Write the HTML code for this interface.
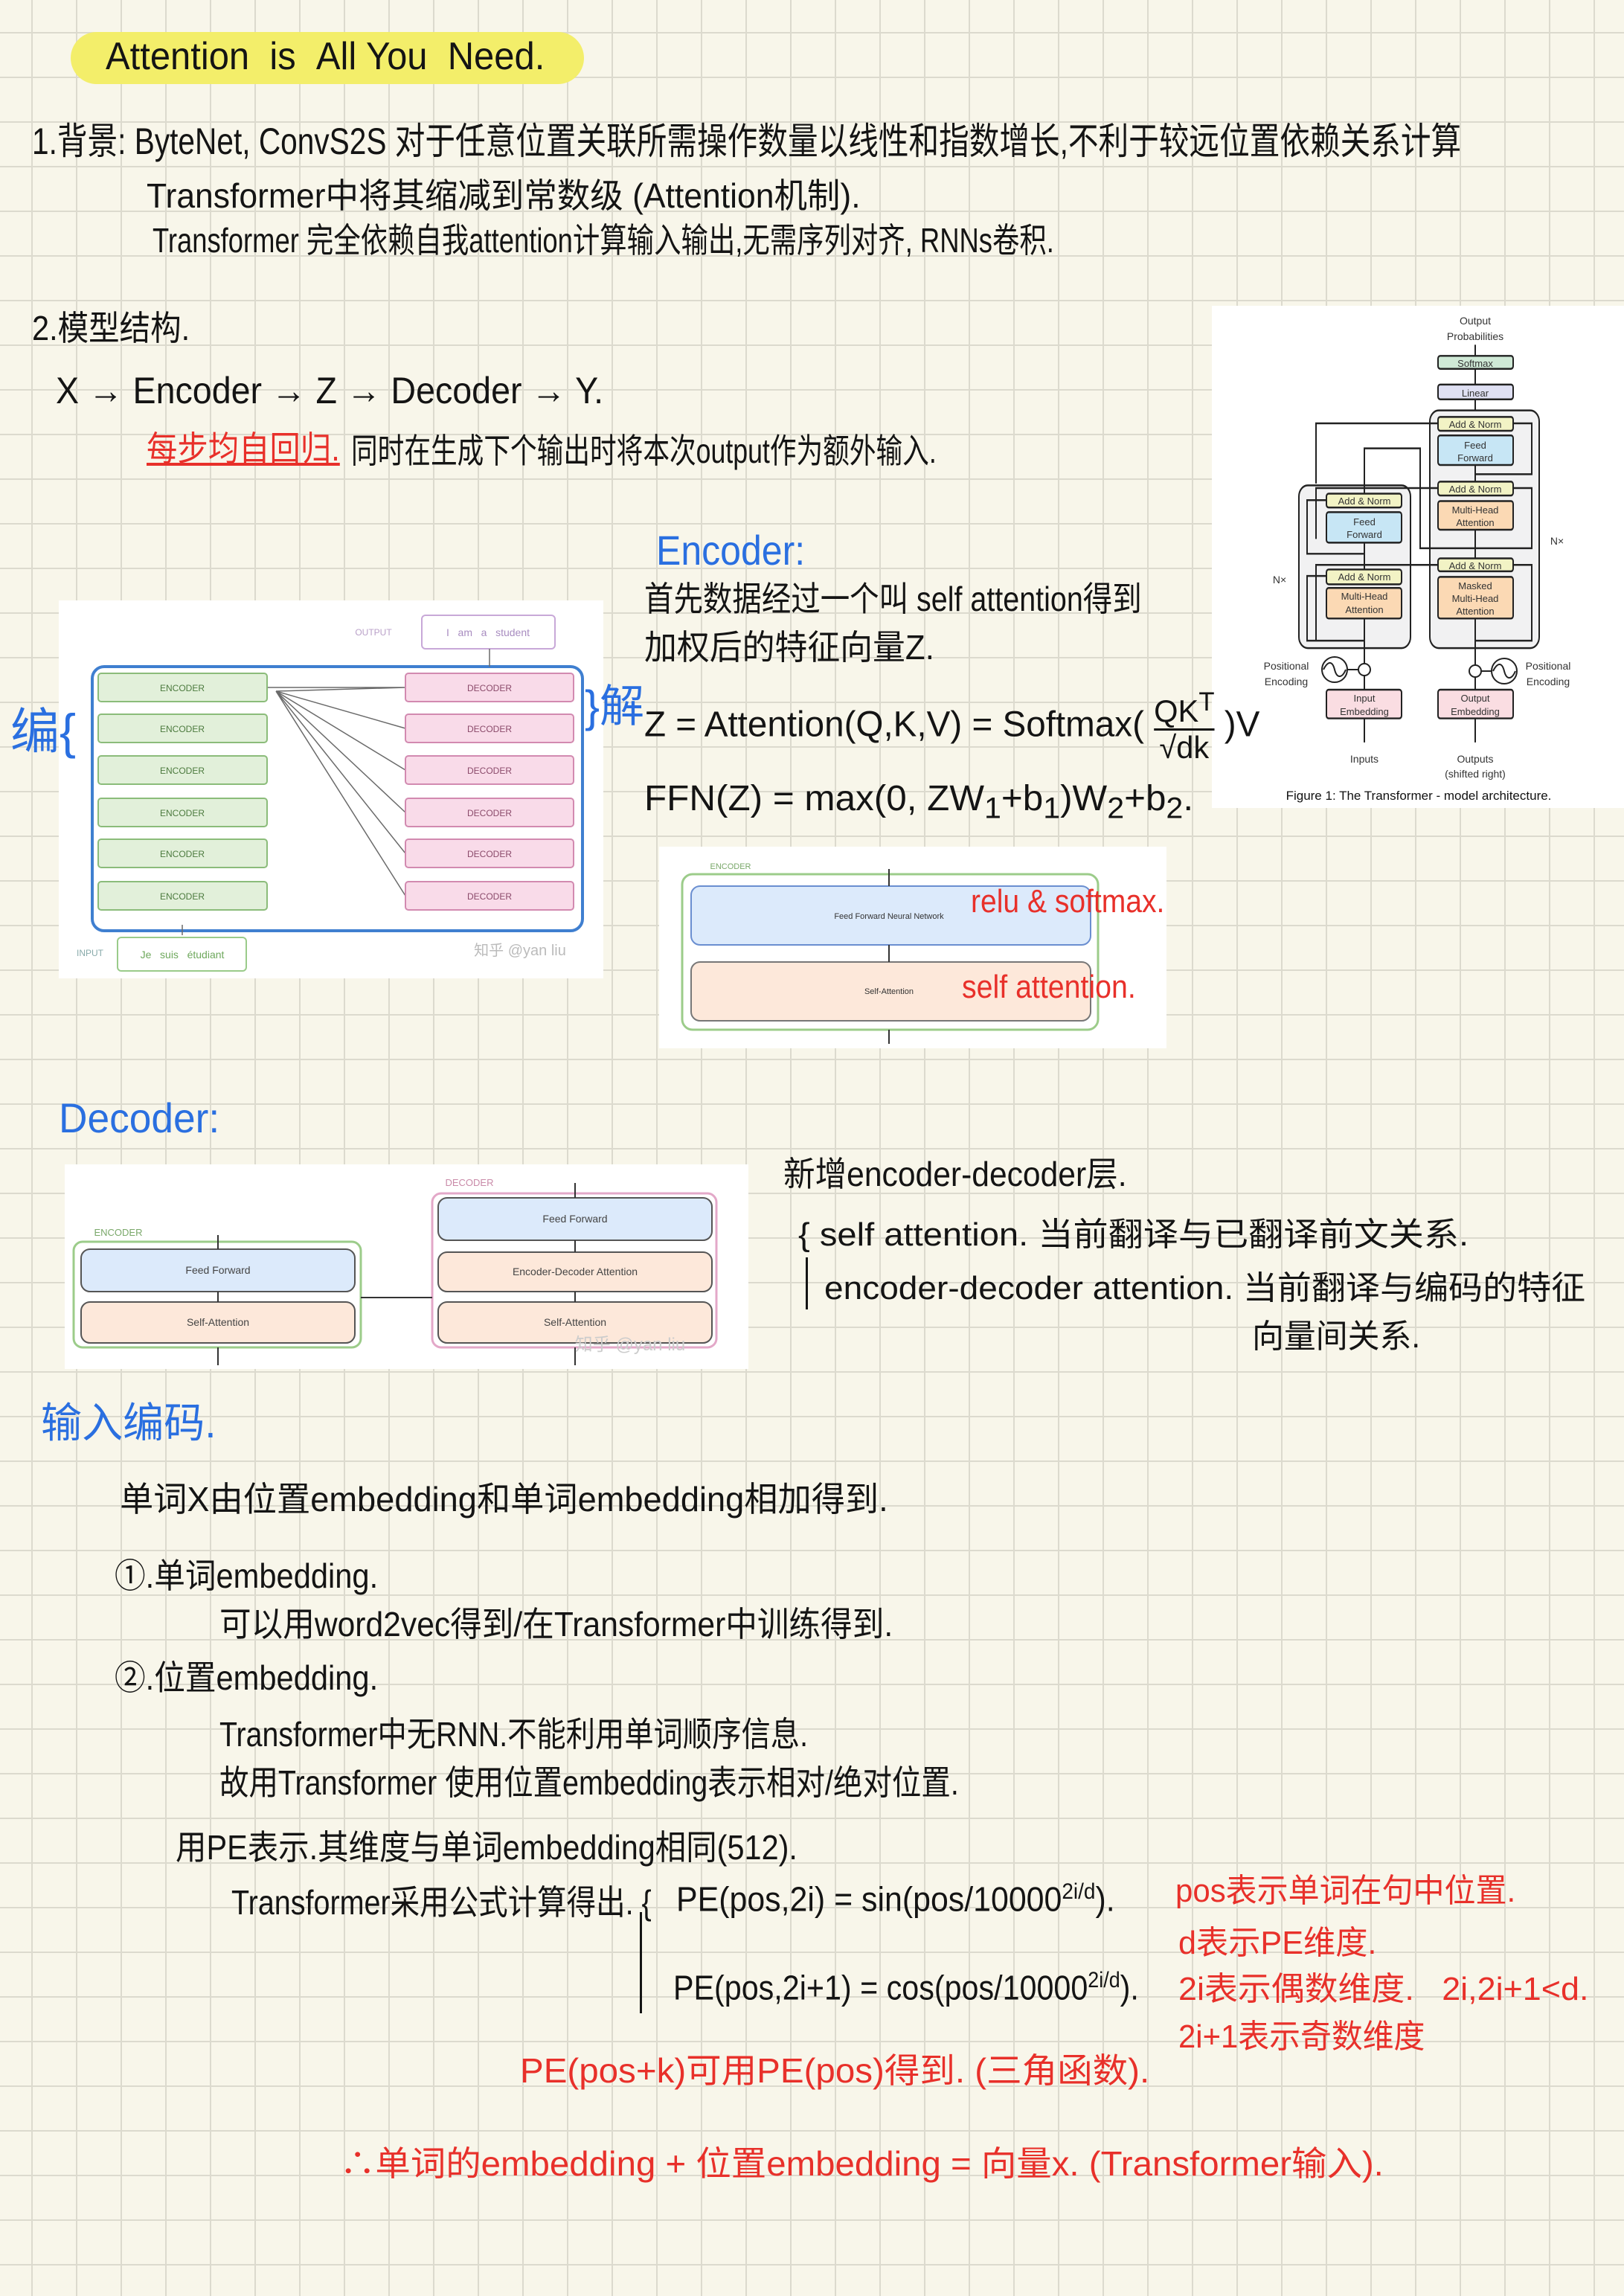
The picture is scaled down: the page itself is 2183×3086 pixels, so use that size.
<!DOCTYPE html>
<html><head><meta charset="utf-8"><style>
*{margin:0;padding:0;box-sizing:border-box}
body{width:2183px;height:3086px;position:relative;overflow:hidden;background-color:#f8f6ea;
background-image:linear-gradient(to right,#dcdace 2px,transparent 2px),linear-gradient(to bottom,#dcdace 2px,transparent 2px);
background-size:60px 60px;background-position:42px 43px;
font-family:"Liberation Sans","Noto Sans CJK SC",sans-serif;color:#141414}
.t{position:absolute;white-space:nowrap;font-size:46px;line-height:1;transform-origin:0 0;z-index:2}
.r{color:#e8302a}.b{color:#2a6fe0}
.img{position:absolute;background:#fff;z-index:1}
svg text{font-family:"Liberation Sans",sans-serif}
</style></head><body>

<div style="position:absolute;left:95px;top:43px;width:690px;height:70px;border-radius:35px;background:#f3ee6a"></div>
<div class="t" style="left:142px;top:50px;font-size:52px;--w:590">Attention &nbsp;is &nbsp;All You &nbsp;Need.</div>

<div class="t" style="left:43px;top:165px;font-size:50px;--w:1921">1.背景: ByteNet, ConvS2S 对于任意位置关联所需操作数量以线性和指数增长,不利于较远位置依赖关系计算</div>
<div class="t" style="left:197px;top:240px;--w:960">Transformer中将其缩减到常数级 (Attention机制).</div>
<div class="t" style="left:205px;top:300px;--w:1212">Transformer 完全依赖自我attention计算输入输出,无需序列对齐, RNNs卷积.</div>

<div class="t" style="left:43px;top:418px;--w:212">2.模型结构.</div>
<div class="t" style="left:75px;top:500px;font-size:50px;--w:736">X → Encoder → Z → Decoder → Y.</div>
<div class="t r" style="left:197px;top:580px;text-decoration:underline;--w:260">每步均自回归.</div>
<div class="t" style="left:472px;top:583px;--w:787">同时在生成下个输出时将本次output作为额外输入.</div>

<div class="t b" style="left:882px;top:712px;font-size:56px;--w:200">Encoder:</div>
<div class="t" style="left:866px;top:782px;--w:669">首先数据经过一个叫 self attention得到</div>
<div class="t" style="left:866px;top:847px;--w:390">加权后的特征向量Z.</div>
<div class="t" style="left:866px;top:925px;font-size:48px;--w:827">Z = Attention(Q,K,V) = Softmax( <span style="display:inline-block;vertical-align:middle;text-align:center;font-size:42px;line-height:1.1"><span style="display:block;border-bottom:3px solid #141414">QK<sup>T</sup></span>√dk</span> )V</div>
<div class="t" style="left:866px;top:1050px;font-size:48px;--w:738">FFN(Z) = max(0, ZW<sub>1</sub>+b<sub>1</sub>)W<sub>2</sub>+b<sub>2</sub>.</div>

<!-- Transformer figure -->
<div class="img" style="left:1629px;top:411px;width:554px;height:675px">
<svg width="554" height="675" viewBox="0 0 554 675" font-size="14" text-anchor="middle">
<g transform="translate(0,2.67) scale(1,1.243)">
<rect x="293" y="111" width="147" height="257" rx="12" fill="#f1f1f2" stroke="#222" stroke-width="2"/>
<rect x="117" y="192" width="150" height="176" rx="12" fill="#f1f1f2" stroke="#222" stroke-width="2"/>
<g stroke="#222" stroke-width="2">
<rect x="304" y="52" width="101" height="14" rx="3" fill="#cfe9d6"/>
<rect x="304" y="83" width="101" height="16" rx="3" fill="#dfe0f3"/>
<rect x="304" y="118" width="101" height="15" rx="3" fill="#f2f3c5"/>
<rect x="304" y="138" width="101" height="32" rx="3" fill="#c7e6f5"/>
<rect x="304" y="188" width="101" height="15" rx="3" fill="#f2f3c5"/>
<rect x="304" y="209" width="101" height="31" rx="3" fill="#fbd9b4"/>
<rect x="304" y="271" width="101" height="14" rx="3" fill="#f2f3c5"/>
<rect x="304" y="291" width="101" height="45" rx="3" fill="#fbd9b4"/>
<rect x="304" y="413" width="101" height="31" rx="3" fill="#fadde2"/>
<rect x="154" y="201" width="101" height="15" rx="3" fill="#f2f3c5"/>
<rect x="154" y="221" width="101" height="33" rx="3" fill="#c7e6f5"/>
<rect x="154" y="283" width="101" height="16" rx="3" fill="#f2f3c5"/>
<rect x="154" y="303" width="101" height="33" rx="3" fill="#fbd9b4"/>
<rect x="154" y="413" width="101" height="31" rx="3" fill="#fadde2"/>
<path d="M354 52V40M354 83V66M354 111V99M354 188V170M354 271V240M354 413V336M354 470V444M205 413V336M205 470V444M205 283V254M205 201V152H280V260H354" fill="none"/>
<path d="M304 125H140V190M304 195H140V250M304 278H140V360H200M154 208H128V266H205M154 290H128V360H205M405 125H430V180H354M405 195H430V260H354M405 278H430V360H354" fill="none"/>
</g></g>
<g stroke="#222" stroke-width="2">
<circle cx="205" cy="489" r="8" fill="#fff"/><circle cx="354" cy="491" r="8" fill="#fff"/>
<circle cx="165" cy="489" r="17" fill="#fff"/><circle cx="393" cy="491" r="17" fill="#fff"/>
<path d="M182 489H197M362 491H376M150 489c6-12 12-12 15 0s10 12 15 0M378 491c6-12 12-12 15 0s10 12 15 0" fill="none"/>
</g>
<g fill="#333">
<text x="354" y="25">Output</text><text x="354" y="46">Probabilities</text>
<text x="354" y="82" font-size="13">Softmax</text><text x="354" y="122" font-size="13">Linear</text>
<text x="354" y="164" font-size="13">Add &amp; Norm</text><text x="354" y="192" font-size="13">Feed</text><text x="354" y="209" font-size="13">Forward</text>
<text x="354" y="251" font-size="13">Add &amp; Norm</text><text x="354" y="279" font-size="13">Multi-Head</text><text x="354" y="296" font-size="13">Attention</text>
<text x="354" y="354" font-size="13">Add &amp; Norm</text><text x="354" y="381" font-size="13">Masked</text><text x="354" y="398" font-size="13">Multi-Head</text><text x="354" y="415" font-size="13">Attention</text>
<text x="354" y="532" font-size="13">Output</text><text x="354" y="550" font-size="13">Embedding</text>
<text x="205" y="267" font-size="13">Add &amp; Norm</text><text x="205" y="295" font-size="13">Feed</text><text x="205" y="312" font-size="13">Forward</text>
<text x="205" y="369" font-size="13">Add &amp; Norm</text><text x="205" y="395" font-size="13">Multi-Head</text><text x="205" y="413" font-size="13">Attention</text>
<text x="205" y="532" font-size="13">Input</text><text x="205" y="550" font-size="13">Embedding</text>
<text x="100" y="489">Positional</text><text x="100" y="510">Encoding</text>
<text x="452" y="489">Positional</text><text x="452" y="510">Encoding</text>
<text x="205" y="614">Inputs</text><text x="354" y="614">Outputs</text><text x="354" y="634">(shifted right)</text>
<text x="91" y="373">N×</text><text x="464" y="321">N×</text>
<text x="278" y="664" font-family="Liberation Serif" font-size="17" fill="#111">Figure 1: The Transformer - model architecture.</text>
</g></svg></div>

<!-- stack image -->
<div class="img" style="left:79px;top:807px;width:732px;height:508px">
<svg width="732" height="508" font-size="13" text-anchor="middle">
<text x="423" y="47" fill="#b9a0c8" font-size="12">OUTPUT</text>
<rect x="488" y="20" width="179" height="45" rx="5" fill="#fff" stroke="#c8a8d8" stroke-width="2"/>
<text x="577" y="48" fill="#a88cc0" font-size="14">I &#160; am &#160; a &#160; student</text>
<rect x="45" y="89" width="659" height="355" rx="16" fill="none" stroke="#3f7fd0" stroke-width="4"/>
<g stroke="#6a6a6a" stroke-width="1.5" fill="none">
<path d="M292 122L466 117M292 122L466 172M292 122L466 228M292 122L466 285M292 122L466 340M292 122L466 397M280 117H466"/>
<path d="M166 450V436M579 89V65"/>
</g>
<g font-size="12">
<rect x="53" y="98" width="227" height="38" rx="4" fill="#e2f0da" stroke="#8bbc7a" stroke-width="2"/><text x="166" y="122" fill="#4c7a3e">ENCODER</text>
<rect x="53" y="153" width="227" height="38" rx="4" fill="#e2f0da" stroke="#8bbc7a" stroke-width="2"/><text x="166" y="177" fill="#4c7a3e">ENCODER</text>
<rect x="53" y="209" width="227" height="38" rx="4" fill="#e2f0da" stroke="#8bbc7a" stroke-width="2"/><text x="166" y="233" fill="#4c7a3e">ENCODER</text>
<rect x="53" y="266" width="227" height="38" rx="4" fill="#e2f0da" stroke="#8bbc7a" stroke-width="2"/><text x="166" y="290" fill="#4c7a3e">ENCODER</text>
<rect x="53" y="321" width="227" height="38" rx="4" fill="#e2f0da" stroke="#8bbc7a" stroke-width="2"/><text x="166" y="345" fill="#4c7a3e">ENCODER</text>
<rect x="53" y="378" width="227" height="38" rx="4" fill="#e2f0da" stroke="#8bbc7a" stroke-width="2"/><text x="166" y="402" fill="#4c7a3e">ENCODER</text>
<rect x="466" y="98" width="226" height="38" rx="4" fill="#f9dbe9" stroke="#d28ab0" stroke-width="2"/><text x="579" y="122" fill="#8a4a6a">DECODER</text>
<rect x="466" y="153" width="226" height="38" rx="4" fill="#f9dbe9" stroke="#d28ab0" stroke-width="2"/><text x="579" y="177" fill="#8a4a6a">DECODER</text>
<rect x="466" y="209" width="226" height="38" rx="4" fill="#f9dbe9" stroke="#d28ab0" stroke-width="2"/><text x="579" y="233" fill="#8a4a6a">DECODER</text>
<rect x="466" y="266" width="226" height="38" rx="4" fill="#f9dbe9" stroke="#d28ab0" stroke-width="2"/><text x="579" y="290" fill="#8a4a6a">DECODER</text>
<rect x="466" y="321" width="226" height="38" rx="4" fill="#f9dbe9" stroke="#d28ab0" stroke-width="2"/><text x="579" y="345" fill="#8a4a6a">DECODER</text>
<rect x="466" y="378" width="226" height="38" rx="4" fill="#f9dbe9" stroke="#d28ab0" stroke-width="2"/><text x="579" y="402" fill="#8a4a6a">DECODER</text>
</g>
<text x="42" y="478" fill="#8aa" font-size="12">INPUT</text>
<rect x="79" y="453" width="173" height="45" rx="5" fill="#fff" stroke="#9acb8a" stroke-width="2"/>
<text x="166" y="481" fill="#6ea85c" font-size="14">Je &#160; suis &#160; étudiant</text>
<text x="620" y="477" fill="#bbb" font-size="20" font-family="Noto Sans CJK SC">知乎 @yan liu</text>
</svg></div>
<div class="t b" style="left:14px;top:950px;font-size:66px">编{</div>
<div class="t b" style="left:786px;top:920px;font-size:60px">}解</div>

<!-- encoder small -->
<div class="img" style="left:886px;top:1138px;width:682px;height:271px">
<svg width="682" height="271" text-anchor="middle">
<text x="96" y="30" fill="#7aa86a" font-size="11">ENCODER</text>
<rect x="31" y="37" width="559" height="209" rx="14" fill="none" stroke="#9ccc8a" stroke-width="3"/>
<rect x="43" y="53" width="537" height="79" rx="12" fill="#dceafb" stroke="#6a8ed0" stroke-width="2"/>
<rect x="43" y="155" width="537" height="79" rx="12" fill="#fde8da" stroke="#777" stroke-width="2"/>
<g stroke="#333" stroke-width="2"><path d="M309 53V30M309 155V132M309 265V246"/></g>
<text x="309" y="97" font-size="11" fill="#333">Feed Forward Neural Network</text>
<text x="309" y="198" font-size="11" fill="#333">Self-Attention</text>
</svg></div>
<div class="t r" style="left:1305px;top:1190px;font-size:44px;--w:260">relu &amp; softmax.</div>
<div class="t r" style="left:1293px;top:1305px;font-size:44px;--w:234">self attention.</div>

<div class="t b" style="left:79px;top:1475px;font-size:56px;--w:216">Decoder:</div>

<!-- decoder image -->
<div class="img" style="left:87px;top:1565px;width:919px;height:275px">
<svg width="919" height="275" text-anchor="middle" font-size="14">
<text x="72" y="96" fill="#7aa86a" font-size="13">ENCODER</text>
<rect x="12" y="104" width="386" height="142" rx="12" fill="none" stroke="#9ccc8a" stroke-width="3"/>
<rect x="22" y="114" width="368" height="57" rx="12" fill="#dceafb" stroke="#555" stroke-width="2"/>
<rect x="22" y="185" width="368" height="55" rx="12" fill="#fde8da" stroke="#555" stroke-width="2"/>
<text x="544" y="29" fill="#c98aa8" font-size="13">DECODER</text>
<rect x="494" y="39" width="382" height="207" rx="12" fill="none" stroke="#e3a8c8" stroke-width="3"/>
<rect x="502" y="45" width="368" height="57" rx="12" fill="#dceafb" stroke="#555" stroke-width="2"/>
<rect x="502" y="118" width="368" height="53" rx="12" fill="#fde8da" stroke="#555" stroke-width="2"/>
<rect x="502" y="185" width="368" height="55" rx="12" fill="#fde8da" stroke="#555" stroke-width="2"/>
<g stroke="#333" stroke-width="2"><path d="M206 114V95M206 185V171M206 270V246M398 179H494M686 45V25M686 118V102M686 185V171M686 270V246"/></g>
<text x="206" y="147" fill="#444">Feed Forward</text><text x="206" y="217" fill="#444">Self-Attention</text>
<text x="686" y="78" fill="#444">Feed Forward</text><text x="686" y="149" fill="#444">Encoder-Decoder Attention</text><text x="686" y="217" fill="#444">Self-Attention</text>
<text x="760" y="250" fill="#ccc" font-size="24" font-family="Noto Sans CJK SC">知乎 @yan liu</text>
</svg></div>

<div class="t" style="left:1053px;top:1555px;--w:462">新增encoder-decoder层.</div>
<div class="t" style="left:1073px;top:1638px;font-size:44px;--w:901">{ self attention. 当前翻译与已翻译前文关系.</div>
<div style="position:absolute;left:1083px;top:1690px;width:3px;height:70px;background:#141414"></div>
<div class="t" style="left:1108px;top:1710px;font-size:44px;--w:1023">encoder-decoder attention. 当前翻译与编码的特征</div>
<div class="t" style="left:1683px;top:1775px;font-size:44px;--w:226">向量间关系.</div>

<div class="t b" style="left:55px;top:1885px;font-size:56px;--w:236">输入编码.</div>
<div class="t" style="left:161px;top:1992px;--w:1033">单词X由位置embedding和单词embedding相加得到.</div>
<div class="t" style="left:154px;top:2095px;--w:354">①.单词embedding.</div>
<div class="t" style="left:295px;top:2160px;--w:905">可以用word2vec得到/在Transformer中训练得到.</div>
<div class="t" style="left:154px;top:2232px;--w:354">②.位置embedding.</div>
<div class="t" style="left:295px;top:2308px;--w:791">Transformer中无RNN.不能利用单词顺序信息.</div>
<div class="t" style="left:295px;top:2373px;--w:994">故用Transformer 使用位置embedding表示相对/绝对位置.</div>
<div class="t" style="left:236px;top:2460px;--w:836">用PE表示.其维度与单词embedding相同(512).</div>
<div class="t" style="left:311px;top:2534px;--w:565">Transformer采用公式计算得出. {</div>
<div style="position:absolute;left:860px;top:2570px;width:3px;height:136px;background:#141414"></div>
<div class="t" style="left:909px;top:2528px;--w:590">PE(pos,2i) = sin(pos/10000<sup style="font-size:30px">2i/d</sup>).</div>
<div class="t" style="left:905px;top:2647px;--w:626">PE(pos,2i+1) = cos(pos/10000<sup style="font-size:30px">2i/d</sup>).</div>
<div class="t r" style="left:1580px;top:2520px;font-size:44px;--w:457">pos表示单词在句中位置.</div>
<div class="t r" style="left:1584px;top:2590px;font-size:44px;--w:266">d表示PE维度.</div>
<div class="t r" style="left:1584px;top:2652px;font-size:44px;--w:551">2i表示偶数维度. &nbsp; 2i,2i+1&lt;d.</div>
<div class="t r" style="left:1584px;top:2716px;font-size:44px;--w:331">2i+1表示奇数维度</div>
<div class="t r" style="left:699px;top:2760px;--w:846">PE(pos+k)可用PE(pos)得到. (三角函数).</div>
<div class="t r" style="left:457px;top:2885px;--w:1403">∴单词的embedding + 位置embedding = 向量x. (Transformer输入).</div>
<script>
document.querySelectorAll('.t').forEach(function(e){
  var w=parseFloat(getComputedStyle(e).getPropertyValue('--w'));
  if(w&&e.offsetWidth){e.style.transform='scaleX('+(w/e.offsetWidth)+')';}
});
</script>
</body></html>
